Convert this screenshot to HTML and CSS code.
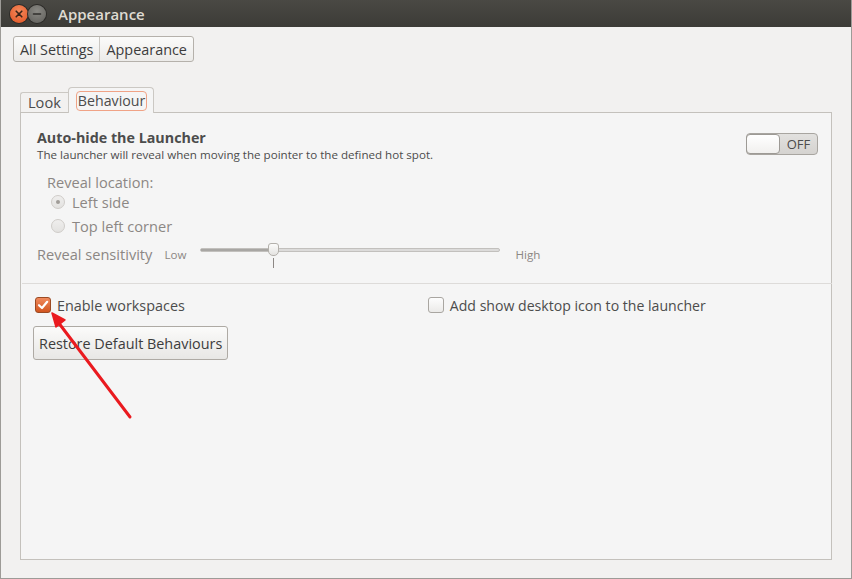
FILE: index.html
```html
<!DOCTYPE html>
<html lang="en">
<head>
    <meta charset="UTF-8">
    <title>Appearance</title>
    <link rel="stylesheet" href="styles.css">
</head>
<body>
    <div class="window">
        <div class="titlebar">
            <span class="win-btn win-close">
                <svg width="18" height="18" viewBox="0 0 18 18"><path d="M6.2 6.2 L11.8 11.8 M11.8 6.2 L6.2 11.8" stroke="#3a2418" stroke-width="1.6" stroke-linecap="round"/></svg>
            </span>
            <span class="win-btn win-min">
                <svg width="18" height="18" viewBox="0 0 18 18"><path d="M5.5 9 H12.5" stroke="#2f2e2b" stroke-width="1.6" stroke-linecap="round"/></svg>
            </span>
            <span class="win-title">Appearance</span>
        </div>

        <div class="content">
            <div class="breadcrumb">
                <button class="crumb">All Settings</button>
                <button class="crumb">Appearance</button>
            </div>

            <div class="tabs">
                <div class="tab">Look</div>
                <div class="tab tab-active"><span class="tab-focus">Behaviour</span></div>
            </div>

            <div class="panel">
                <div class="launcher-row">
                    <div>
                        <div class="section-title">Auto-hide the Launcher</div>
                        <div class="section-desc">The launcher will reveal when moving the pointer to the defined hot spot.</div>
                    </div>
                    <div class="switch">
                        <span class="switch-knob"></span>
                        <span class="switch-label">OFF</span>
                    </div>
                </div>

                <div class="reveal">
                    <div class="reveal-label">Reveal location:</div>
                    <label class="radio-row"><span class="radio radio-on"></span>Left side</label>
                    <label class="radio-row"><span class="radio"></span>Top left corner</label>
                </div>

                <div class="sensitivity">
                    <span class="sens-label">Reveal sensitivity</span>
                    <span class="sens-end">Low</span>
                    <div class="slider">
                        <div class="slider-track"><div class="slider-fill" style="width: 24%"></div></div>
                        <div class="slider-knob" style="left: 24.3%"></div>
                        <div class="slider-tick" style="left: 24.3%"></div>
                    </div>
                    <span class="sens-end">High</span>
                </div>

                <div class="separator"></div>

                <div class="options">
                    <label class="check-row"><span class="check check-on">
                        <svg width="16" height="16" viewBox="0 0 16 16"><path d="M4 8.2 L7 11 L12.2 4.8" fill="none" stroke="#fff" stroke-width="2.2" stroke-linecap="round" stroke-linejoin="round"/></svg>
                    </span>Enable workspaces</label>
                    <label class="check-row check-wide"><span class="check"></span>Add show desktop icon to the launcher</label>
                </div>

                <button class="restore">Restore Default Behaviours</button>
            </div>
        </div>

        <svg class="annotation" width="852" height="579" viewBox="0 0 852 579">
            <line x1="129" y1="417" x2="57" y2="322" stroke="#ea1a1f" stroke-width="3" stroke-linecap="round"/>
            <path d="M51 313 L64 320 L55 327 Z" fill="#ea1a1f" stroke="#ea1a1f" stroke-width="1.5" stroke-linejoin="round"/>
        </svg>
    </div>
</body>
</html>
```

FILE: styles.css
```css
body {
    margin: 0;
    font-family: "Open Sans", "DejaVu Sans", sans-serif;
    background-color: #f2f1f0;
}

.window {
    position: relative;
    width: 852px;
    height: 579px;
    box-sizing: border-box;
    border: 1px solid #9d9b97;
    border-top: none;
    background-color: #f2f1f0;
    overflow: hidden;
}

.titlebar {
    height: 27px;
    margin: 0 -1px;
    background: linear-gradient(#4a4944, #3c3b37);
    display: flex;
    align-items: center;
    padding-left: 10px;
}

.win-btn {
    width: 18px;
    height: 18px;
    border-radius: 50%;
    display: inline-flex;
}

.win-close {
    background: radial-gradient(circle at 50% 35%, #f58a5c, #e05222);
    box-shadow: 0 0 0 1px #2c2b28;
}

.win-min {
    background: radial-gradient(circle at 50% 35%, #8a8984, #5e5d59);
    box-shadow: 0 0 0 1px #2c2b28;
}

.win-title {
    margin-left: 12px;
    color: #dfdbd2;
    font-size: 15px;
    font-weight: 600;
}

.content {
    padding: 9px 0 0 12px;
}

.breadcrumb {
    display: inline-flex;
    border: 1px solid #b5b1ab;
    border-radius: 3px;
    background: linear-gradient(#fbfbfa, #ecebe9);
    height: 24px;
}

.crumb {
    border: none;
    background: none;
    font-family: inherit;
    font-size: 14.4px;
    color: #3c3c3c;
    padding: 0 6px;
}

.crumb + .crumb {
    border-left: 1px solid #c9c6c1;
}

.tabs {
    display: flex;
    align-items: flex-end;
    margin: 24px 0 0 7px;
    height: 26px;
}

.tab {
    height: 19px;
    padding: 0 7px;
    font-size: 14.6px;
    color: #4c4c4c;
    border: 1px solid #cbc8c3;
    border-bottom: none;
    border-right: none;
    border-radius: 3px 0 0 0;
    line-height: 19px;
}

.tab-active {
    height: 25px;
    background-color: #f5f5f5;
    border-right: 1px solid #cbc8c3;
    border-radius: 4px 4px 0 0;
    padding: 0 6px 0 7px;
    margin-bottom: -1px;
    display: flex;
    align-items: center;
    font-size: 14.2px;
}

.tab-focus {
    border: 1px solid #f0a386;
    border-radius: 4px;
    padding: 0 1px;
    line-height: 18px;
}

.panel {
    margin-left: 7px;
    width: 812px;
    height: 448px;
    box-sizing: border-box;
    border: 1px solid #c4c1bc;
    background-color: #f5f5f5;
    padding: 15px 13px 0 16px;
}

.launcher-row {
    display: flex;
    justify-content: space-between;
    align-items: flex-start;
}

.section-title {
    font-size: 14.3px;
    font-weight: bold;
    color: #4c4c4c;
    line-height: 19px;
}

.section-desc {
    font-size: 11.6px;
    color: #4c4c4c;
    line-height: 16px;
}

.switch {
    margin-top: 5px;
    width: 70px;
    height: 20px;
    border: 1px solid #a8a5a0;
    border-radius: 4px;
    background: linear-gradient(#e2e1df, #d5d3d0);
    display: flex;
    align-items: center;
}

.switch-knob {
    width: 34px;
    height: 20px;
    box-sizing: border-box;
    border: 1px solid #9d9a95;
    border-radius: 4px;
    margin-left: -1px;
    background: linear-gradient(#ffffff, #f1f0ee);
}

.switch-label {
    flex: 1;
    text-align: center;
    font-size: 13px;
    color: #4c4c4c;
}

.reveal {
    padding: 11px 0 0 10px;
    color: #8c8784;
    font-size: 14.6px;
}

.reveal-label {
    line-height: 16px;
}

.radio-row {
    display: flex;
    align-items: center;
    height: 24px;
    margin-left: 4px;
}

.radio {
    width: 14px;
    height: 14px;
    box-sizing: border-box;
    border: 1px solid #cfccc8;
    border-radius: 50%;
    background: linear-gradient(#efeeed, #e3e2e0);
    margin-right: 7px;
    position: relative;
}

.radio-on::after {
    content: "";
    position: absolute;
    left: 4px;
    top: 4px;
    width: 4px;
    height: 4px;
    border-radius: 50%;
    background-color: #a09c98;
}

.sensitivity {
    display: flex;
    align-items: center;
    height: 28px;
    margin-top: 2px;
    color: #8c8784;
}

.sens-label {
    font-size: 14.6px;
    margin-right: 12px;
}

.sens-end {
    font-size: 11.6px;
}

.slider {
    position: relative;
    width: 300px;
    height: 28px;
    margin: 0 15px 0 14px;
}

.slider-track {
    position: absolute;
    left: 0;
    right: 0;
    top: 8px;
    height: 4px;
    border-radius: 2px;
    background-color: #dcdbda;
    border: 1px solid #c2c0bd;
    box-sizing: border-box;
}

.slider-fill {
    height: 100%;
    background-color: #a8a6a3;
}

.slider-knob {
    position: absolute;
    top: 3px;
    width: 11px;
    height: 13px;
    margin-left: -5px;
    box-sizing: border-box;
    border: 1px solid #b3b0ab;
    border-radius: 3px 3px 5px 5px;
    background: linear-gradient(#fbfbfa, #e4e3e1);
}

.slider-tick {
    position: absolute;
    top: 18px;
    width: 1px;
    height: 10px;
    background-color: #8c8784;
}

.separator {
    height: 1px;
    background-color: #dddbd9;
    margin: 15px -14px 0 -15px;
}

.options {
    display: flex;
    margin-top: 12px;
    font-size: 14.4px;
    color: #4c4c4c;
}

.check-row {
    display: flex;
    align-items: center;
    height: 18px;
}

.check-wide {
    margin-left: 245px;
    font-size: 14.1px;
}

.check {
    width: 16px;
    height: 16px;
    box-sizing: border-box;
    border: 1px solid #a9a6a1;
    border-radius: 3px;
    background: linear-gradient(#fdfdfd, #ebeae8);
    margin: 0 6px 0 -2px;
}

.check-on {
    border-color: #9b4a23;
    background: linear-gradient(#f08a5d, #d2551f);
}

.check-on svg {
    display: block;
    margin: -1px;
}

.restore {
    margin: 12px 0 0 -4px;
    height: 34px;
    padding: 0 5px;
    border: 1px solid #aeaaa4;
    border-radius: 3px;
    background: linear-gradient(#fbfbfa, #e8e7e5);
    font-family: inherit;
    font-size: 14.4px;
    color: #3c3c3c;
}

.annotation {
    position: absolute;
    left: 0;
    top: 0;
    pointer-events: none;
}
```
